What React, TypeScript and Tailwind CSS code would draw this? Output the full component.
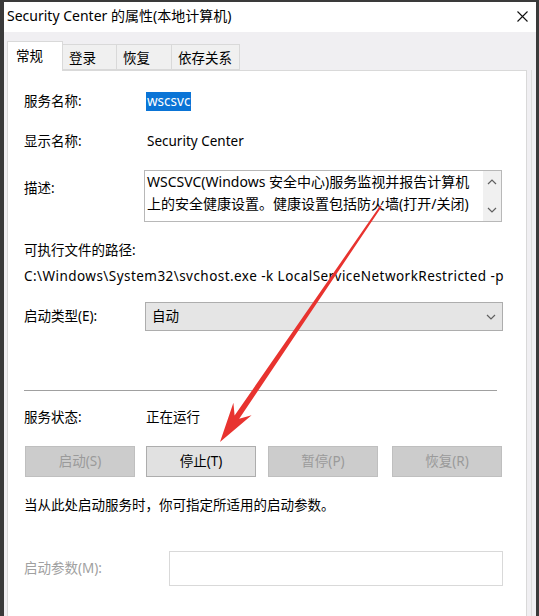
import React from 'react';

const font = { fontFamily: '"Noto Sans", "Noto Sans CJK SC", sans-serif' };

function Chevron({ up = false }: { up?: boolean }) {
  return (
    <svg width="10" height="6" viewBox="0 0 10 6" className="block">
      <path
        d={up ? 'M1 5 L5 1 L9 5' : 'M1 1 L5 5 L9 1'}
        fill="none"
        stroke="#606060"
        strokeWidth="1.2"
      />
    </svg>
  );
}

function Tab({ label, active = false, width }: { label: string; active?: boolean; width: string }) {
  if (active) {
    return (
      <div className={`${width} h-[30px] -mb-px bg-white border border-b-0 border-[#d9d9d9] flex items-center pl-[8px] text-[13.5px] text-black relative z-10`}>
        {label}
      </div>
    );
  }
  return (
    <div className={`${width} h-[26px] mt-[3px] bg-[#f0f0f0] border border-l-0 border-[#d9d9d9] flex items-center pl-[6px] pt-[2px] text-[13.5px] text-black`}>
      {label}
    </div>
  );
}

function Btn({ label, disabled = false, className = '' }: { label: string; disabled?: boolean; className?: string }) {
  return (
    <div
      className={`w-[110px] h-[31px] flex items-center justify-center text-[13.5px] border ${
        disabled ? 'bg-[#cccccc] border-[#bfbfbf] text-[#9a9a9a]' : 'bg-[#e1e1e1] border-[#adadad] text-black'
      } ${className}`}
    >
      {label}
    </div>
  );
}

export default function App() {
  return (
    <div className="w-[539px] h-[616px] bg-[#3a3a3a] pl-[4px] pt-[2px] pr-[3px] overflow-hidden relative" style={font}>
      <div className="h-full bg-[#f0eff2] flex flex-col">
        {/* title bar */}
        <div className="h-[30px] bg-white flex items-center justify-between pl-[3px] pr-[8px] pb-[3px] shrink-0">
          <span className="text-[14px] text-black">Security Center 的属性(本地计算机)</span>
          <svg width="11" height="11" viewBox="0 0 11 11" className="mt-[1px]">
            <path d="M0.5 0.5 L10.5 10.5 M10.5 0.5 L0.5 10.5" stroke="#111" strokeWidth="1.1" />
          </svg>
        </div>

        {/* tabs */}
        <div className="flex items-start ml-[3px] mt-[9px] shrink-0">
          <Tab label="常规" active width="w-[56px]" />
          <Tab label="登录" width="w-[54px]" />
          <Tab label="恢复" width="w-[55px]" />
          <Tab label="依存关系" width="w-[68px]" />
        </div>

        <div className="flex flex-1">
          {/* panel */}
          <div className="ml-[3px] w-[520px] h-[600px] bg-white border border-[#d9d9d9] pl-[16px] text-[13.5px] text-black">
            <div className="flex items-center h-[20px] mt-[20px]">
              <span className="w-[122px]">服务名称:</span>
              <span className="bg-[#0a74d6] text-white h-[19px] leading-[19px] px-[1px]">wscsvc</span>
            </div>

            <div className="flex items-center h-[20px] mt-[20px]">
              <span className="w-[123px]">显示名称:</span>
              <span>Security Center</span>
            </div>

            <div className="flex mt-[19px]">
              <span className="w-[120px] pt-[8px]">描述:</span>
              <div className="w-[358px] h-[52px] border border-[#b8b8b8] flex">
                <div className="flex-1 pl-[2px] leading-[22px] text-[14px] whitespace-nowrap overflow-hidden">
                  <div>WSCSVC(Windows 安全中心)服务监视并报告计算机</div>
                  <div>上的安全健康设置。健康设置包括防火墙(打开/关闭)</div>
                </div>
                <div className="w-[18px] bg-[#f0f0f0] flex flex-col items-center justify-between py-[8px]">
                  <Chevron up />
                  <Chevron />
                </div>
              </div>
            </div>

            <div className="h-[20px] flex items-center mt-[18px]">可执行文件的路径:</div>
            <div className="h-[20px] flex items-center mt-[6px] whitespace-nowrap tracking-[0.45px]">
              C:\Windows\System32\svchost.exe -k LocalServiceNetworkRestricted -p
            </div>

            <div className="flex items-center mt-[16px]">
              <span className="w-[121px]">启动类型(E):</span>
              <div className="w-[358px] h-[29px] bg-[#e5e5e5] border border-[#adadad] flex items-center justify-between pl-[6px] pr-[6px]">
                <span>自动</span>
                <Chevron />
              </div>
            </div>

            <div className="w-[473px] h-px bg-[#a0a0a0] mt-[59px]" />

            <div className="flex items-center h-[20px] mt-[16px]">
              <span className="w-[122px]">服务状态:</span>
              <span>正在运行</span>
            </div>

            <div className="flex mt-[19px] ml-[1px]">
              <Btn label="启动(S)" disabled />
              <Btn label="停止(T)" className="ml-[11px]" />
              <Btn label="暂停(P)" disabled className="ml-[12px]" />
              <Btn label="恢复(R)" disabled className="ml-[14px]" />
            </div>

            <div className="h-[20px] flex items-center mt-[18px]">当从此处启动服务时，你可指定所适用的启动参数。</div>

            <div className="flex items-center mt-[36px]">
              <span className="w-[145px] text-[#a0a0a0]">启动参数(M):</span>
              <div className="w-[334px] h-[35px] border border-[#d9d9d9] bg-white" />
            </div>
          </div>
          <div className="ml-[4px] w-px h-full bg-[#dcdcdc]" />
        </div>
      </div>

      {/* red annotation arrow */}
      <svg className="absolute left-0 top-0 pointer-events-none" width="539" height="616" viewBox="0 0 539 616">
        <polygon
          points="220,442 251.6,415.2 239.2,418.8 381.8,206.5 380.2,205.5 234.6,415.6 233.4,402.8"
          fill="#e8332f"
        />
      </svg>
    </div>
  );
}
